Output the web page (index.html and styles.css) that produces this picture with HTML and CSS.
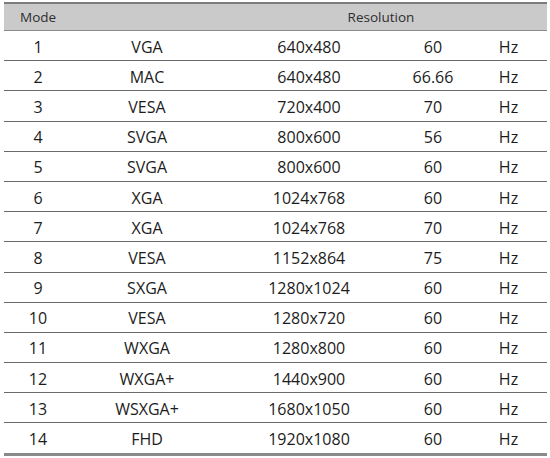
FILE: index.html
```html
<!DOCTYPE html>
<html>
<head>
<meta charset="utf-8">
<link rel="stylesheet" href="styles.css">
</head>
<body>
<div class="table">
  <div class="head">
    <div class="h-mode">Mode</div>
    <div class="h-res">Resolution</div>
  </div>
  <div class="row"><span>1</span><span>VGA</span><span>640x480</span><span>60</span><span>Hz</span></div>
  <div class="row"><span>2</span><span>MAC</span><span>640x480</span><span>66.66</span><span>Hz</span></div>
  <div class="row"><span>3</span><span>VESA</span><span>720x400</span><span>70</span><span>Hz</span></div>
  <div class="row"><span>4</span><span>SVGA</span><span>800x600</span><span>56</span><span>Hz</span></div>
  <div class="row"><span>5</span><span>SVGA</span><span>800x600</span><span>60</span><span>Hz</span></div>
  <div class="row"><span>6</span><span>XGA</span><span>1024x768</span><span>60</span><span>Hz</span></div>
  <div class="row"><span>7</span><span>XGA</span><span>1024x768</span><span>70</span><span>Hz</span></div>
  <div class="row"><span>8</span><span>VESA</span><span>1152x864</span><span>75</span><span>Hz</span></div>
  <div class="row"><span>9</span><span>SXGA</span><span>1280x1024</span><span>60</span><span>Hz</span></div>
  <div class="row"><span>10</span><span>VESA</span><span>1280x720</span><span>60</span><span>Hz</span></div>
  <div class="row"><span>11</span><span>WXGA</span><span>1280x800</span><span>60</span><span>Hz</span></div>
  <div class="row"><span>12</span><span>WXGA+</span><span>1440x900</span><span>60</span><span>Hz</span></div>
  <div class="row"><span>13</span><span>WSXGA+</span><span>1680x1050</span><span>60</span><span>Hz</span></div>
  <div class="row last"><span>14</span><span>FHD</span><span>1920x1080</span><span>60</span><span>Hz</span></div>
</div>
</body>
</html>
```
FILE: styles.css
```css
html, body {
  margin: 0;
  padding: 0;
  background: #ffffff;
}
body {
  font-family: "Open Sans", "Noto Sans", sans-serif;
  color: #1c1c1c;
}
.table {
  margin: 2px 0 0 4px;
  width: 543px;
  border-top: 2px solid #7c7c7c;
}
.head {
  display: grid;
  grid-template-columns: 218px 325px;
  height: 27px;
  box-sizing: border-box;
  background: #cacaca;
  border-bottom: 1px solid #8a8a8a;
  font-size: 13.5px;
  color: #2e2e2e;
  align-items: center;
}
.h-mode {
  padding-left: 16px;
}
.h-res {
  text-align: center;
  padding-right: 7px;
}
.row {
  display: grid;
  grid-template-columns: 68px 150px 174px 74px 77px;
  height: 30.2px;
  box-sizing: border-box;
  border-bottom: 1px solid #6a6a6a;
  font-size: 16px;
  font-weight: 500;
  align-items: center;
  padding-top: 2px;
}
.row span {
  text-align: center;
}
.row.last {
  height: 32.2px;
  border-bottom: 3px solid #8a8a8a;
}
```
